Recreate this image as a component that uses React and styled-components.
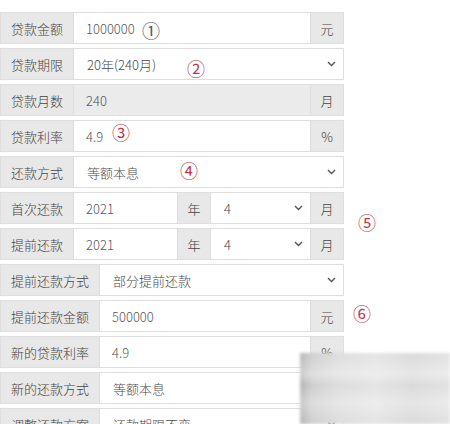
import styled, { createGlobalStyle } from "styled-components"

const GlobalStyle = createGlobalStyle`
  html, body { margin: 0; padding: 0; background: #fff; }
  body { font-family: "Noto Sans CJK SC", "Noto Sans", sans-serif; }
`

function Chevron() {
    return (
        <svg width="9" height="6" viewBox="0 0 9 6">
            <path d="M1 1 L4.5 4.5 L8 1" fill="none" stroke="#555" strokeWidth="1.4" />
        </svg>
    )
}

function Select({ value }) {
    return (
        <SelectBox>
            <span>{value}</span>
            <Chevron />
        </SelectBox>
    )
}

export default function App() {
    return (
        <Page>
            <GlobalStyle />
            <Form>
                <Row>
                    <Label>贷款金额</Label>
                    <Field>1000000</Field>
                    <Unit>元</Unit>
                </Row>
                <Row>
                    <Label>贷款期限</Label>
                    <Select value="20年(240月)" />
                </Row>
                <Row>
                    <Label>贷款月数</Label>
                    <Field $disabled>240</Field>
                    <Unit>月</Unit>
                </Row>
                <Row>
                    <Label>贷款利率</Label>
                    <Field>4.9</Field>
                    <Unit>%</Unit>
                </Row>
                <Row>
                    <Label>还款方式</Label>
                    <Select value="等额本息" />
                </Row>
                <Row>
                    <Label>首次还款</Label>
                    <Field>2021</Field>
                    <Unit>年</Unit>
                    <Select value="4" />
                    <Unit>月</Unit>
                </Row>
                <Row>
                    <Label>提前还款</Label>
                    <Field>2021</Field>
                    <Unit>年</Unit>
                    <Select value="4" />
                    <Unit>月</Unit>
                </Row>
                <Row>
                    <Label>提前还款方式</Label>
                    <Select value="部分提前还款" />
                </Row>
                <Row>
                    <Label>提前还款金额</Label>
                    <Field>500000</Field>
                    <Unit>元</Unit>
                </Row>
                <Row>
                    <Label>新的贷款利率</Label>
                    <Field>4.9</Field>
                    <Unit>%</Unit>
                </Row>
                <Row>
                    <Label>新的还款方式</Label>
                    <Select value="等额本息" />
                </Row>
                <Row>
                    <Label>调整还款方案</Label>
                    <Select value="还款期限不变" />
                </Row>
            </Form>

            <Mark $x={142} $y={21} $dark>①</Mark>
            <Mark $x={187} $y={59}>②</Mark>
            <Mark $x={112} $y={123}>③</Mark>
            <Mark $x={180} $y={161}>④</Mark>
            <Mark $x={358} $y={213}>⑤</Mark>
            <Mark $x={353} $y={304}>⑥</Mark>

            <Smudge />
        </Page>
    )
}

const Page = styled.div`
    position: relative;
    width: 450px;
    height: 424px;
    overflow: hidden;
    background: #fff;
`
const Form = styled.div`
    display: flex;
    flex-direction: column;
    gap: 4px;
    width: 344px;
    padding-top: 12px;
`
const Row = styled.div`
    display: flex;
    height: 32px;
    font-size: 13px;
    font-weight: 300;
`
const Label = styled.div`
    display: flex;
    align-items: center;
    padding: 0 10px;
    background: #e8e8e8;
    border: 1px solid #dedede;
    color: #444;
    white-space: nowrap;
`
const Field = styled.div`
    flex: 1;
    display: flex;
    align-items: center;
    padding: 0 12px;
    background: ${p => p.$disabled ? "#ebebeb" : "#fff"};
    border: 1px solid #dedede;
    border-left: none;
    color: #5a5a5a;
`
const Unit = styled.div`
    width: 33px;
    flex-shrink: 0;
    display: flex;
    align-items: center;
    justify-content: center;
    background: #e8e8e8;
    border: 1px solid #dedede;
    border-left: none;
    box-sizing: border-box;
    color: #444;
`
const SelectBox = styled.div`
    flex: 1;
    display: flex;
    align-items: center;
    justify-content: space-between;
    padding: 0 7px 0 13px;
    background: #fff;
    border: 1px solid #dedede;
    border-left: none;
    color: #4a4a4a;
`
const Mark = styled.span`
    position: absolute;
    left: ${p => p.$x}px;
    top: ${p => p.$y}px;
    font-size: 18px;
    line-height: 18px;
    color: ${p => p.$dark ? "#555" : "#b8394a"};
    font-family: "Noto Sans CJK SC", sans-serif;
`
const Smudge = styled.div`
    position: absolute;
    left: 300px;
    top: 353px;
    width: 150px;
    height: 71px;
    background:
        linear-gradient(180deg, rgba(255,255,255,0) 0%, rgba(255,255,255,0.35) 30%, rgba(255,255,255,0) 45%, rgba(255,255,255,0.3) 70%, rgba(255,255,255,0) 100%),
        linear-gradient(90deg, #b4b4b4 0%, #cfcfcf 8%, #dcdcdc 25%, #e4e4e4 50%, #dadada 75%, #e2e2e2 100%);
    filter: blur(1.5px);
`
